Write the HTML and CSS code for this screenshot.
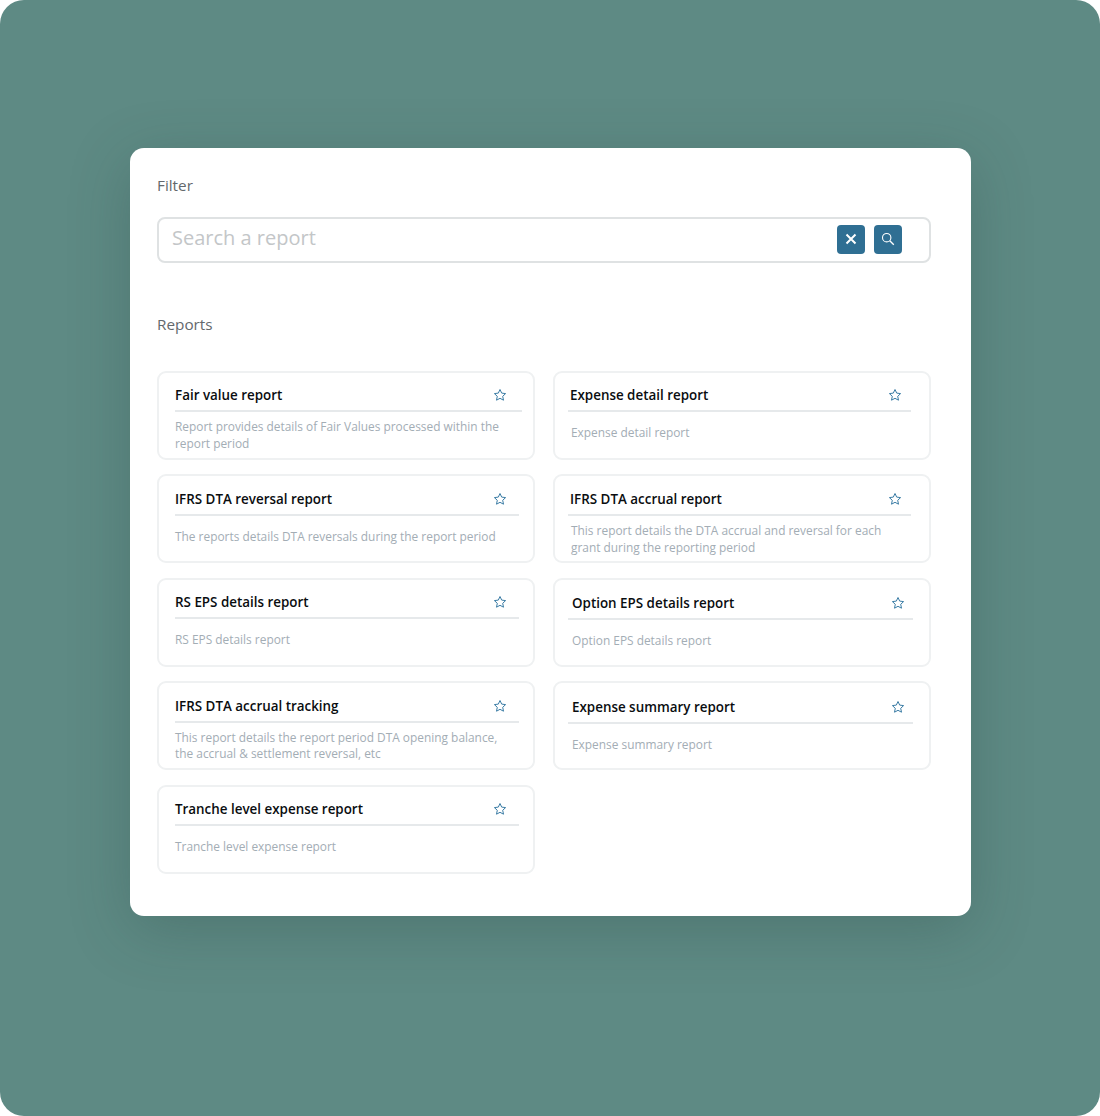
FILE: index.html
```html
<!DOCTYPE html>
<html lang="en">
<head>
  <meta charset="UTF-8">
  <meta name="viewport" content="width=device-width, initial-scale=1.0">
  <title>Reports</title>
  <link rel="stylesheet" href="styles.css">
</head>
<body>
  <svg class="icon-defs" width="0" height="0" aria-hidden="true">
    <symbol id="star" viewBox="0 0 14 14">
      <path d="M7 1.5l1.7 3.6 3.9.5-2.9 2.7.8 3.9L7 10.3l-3.5 1.9.8-3.9-2.9-2.7 3.9-.5z" fill="none" stroke="currentColor" stroke-width="1" stroke-linejoin="round"/>
    </symbol>
  </svg>
  <div class="stage">
    <div class="panel">
      <h2 class="section-label">Filter</h2>
      <div class="search">
        <input class="search-input" type="text" placeholder="Search a report">
        <button class="search-btn" aria-label="Clear">
          <svg width="12" height="12" viewBox="0 0 12 12"><path d="M1.5 1.5l9 9M10.5 1.5l-9 9" stroke="#fff" stroke-width="2" fill="none"/></svg>
        </button>
        <button class="search-btn" aria-label="Search">
          <svg width="14" height="14" viewBox="0 0 14 14"><circle cx="5.7" cy="5.7" r="4.2" stroke="#fff" stroke-width="1.1" fill="none"/><path d="M8.8 8.8l4 4" stroke="#fff" stroke-width="1.3" fill="none"/></svg>
        </button>
      </div>

      <h2 class="section-label section-label-reports">Reports</h2>

      <div class="report-grid">
        <div class="report-card wide-rule">
          <div class="report-head"><span class="report-title">Fair value report</span><svg class="star"><use href="#star"/></svg></div>
          <p class="report-desc">Report provides details of Fair Values processed within the report period</p>
        </div>
        <div class="report-card right">
          <div class="report-head"><span class="report-title">Expense detail report</span><svg class="star"><use href="#star"/></svg></div>
          <p class="report-desc single">Expense detail report</p>
        </div>
        <div class="report-card second-row">
          <div class="report-head"><span class="report-title">IFRS DTA reversal report</span><svg class="star"><use href="#star"/></svg></div>
          <p class="report-desc single">The reports details DTA reversals during the report period</p>
        </div>
        <div class="report-card right second-row">
          <div class="report-head"><span class="report-title">IFRS DTA accrual report</span><svg class="star"><use href="#star"/></svg></div>
          <p class="report-desc">This report details the DTA accrual and reversal for each grant during the reporting period</p>
        </div>
        <div class="report-card">
          <div class="report-head"><span class="report-title">RS EPS details report</span><svg class="star"><use href="#star"/></svg></div>
          <p class="report-desc single">RS EPS details report</p>
        </div>
        <div class="report-card right lower">
          <div class="report-head"><span class="report-title">Option EPS details report</span><svg class="star"><use href="#star"/></svg></div>
          <p class="report-desc single">Option EPS details report</p>
        </div>
        <div class="report-card">
          <div class="report-head"><span class="report-title">IFRS DTA accrual tracking</span><svg class="star"><use href="#star"/></svg></div>
          <p class="report-desc">This report details the report period DTA opening balance, the accrual &amp; settlement reversal, etc</p>
        </div>
        <div class="report-card right lower">
          <div class="report-head"><span class="report-title">Expense summary report</span><svg class="star"><use href="#star"/></svg></div>
          <p class="report-desc single">Expense summary report</p>
        </div>
        <div class="report-card">
          <div class="report-head"><span class="report-title">Tranche level expense report</span><svg class="star"><use href="#star"/></svg></div>
          <p class="report-desc single">Tranche level expense report</p>
        </div>
      </div>
    </div>
  </div>
</body>
</html>
```

FILE: styles.css
```css
body {
  margin: 0;
  background: #fff;
  font-family: "Open Sans", sans-serif;
}

.icon-defs {
  position: absolute;
}

.stage {
  box-sizing: border-box;
  height: 1116px;
  padding: 148px 129px 0 130px;
  background: #5e8a84;
  border-radius: 24px;
}

.panel {
  box-sizing: border-box;
  height: 768px;
  padding: 26px 40px 0 27px;
  background: #fff;
  border-radius: 14px;
  box-shadow: 0 14px 60px rgba(40, 70, 66, 0.28);
}

.section-label {
  margin: 0;
  font-size: 15.3px;
  line-height: 22px;
  font-weight: 500;
  color: #63686c;
}

.section-label-reports {
  margin-top: 50px;
}

.search {
  box-sizing: border-box;
  display: flex;
  align-items: center;
  gap: 9px;
  height: 46px;
  margin-top: 21px;
  padding: 0 27px 0 13px;
  border: 2px solid #dfe2e3;
  border-radius: 8px;
}

.search-input {
  flex: 1;
  min-width: 0;
  padding: 0 0 6px;
  border: 0;
  outline: none;
  font-family: inherit;
  font-size: 20px;
}

.search-input::placeholder {
  color: #c3c6c8;
  opacity: 1;
}

.search-btn {
  display: flex;
  align-items: center;
  justify-content: center;
  width: 28px;
  height: 29px;
  margin-bottom: 2px;
  padding: 0;
  border: 0;
  border-radius: 4px;
  background: #2f6f93;
}

.report-grid {
  display: grid;
  grid-template-columns: 378px 378px;
  grid-auto-rows: 89px;
  gap: 14.5px 18px;
  margin-top: 35.8px;
}

.report-card {
  box-sizing: border-box;
  padding: 11px 14px 0 16px;
  border: 2px solid #eff1f2;
  border-radius: 9px;
}

.report-card.wide-rule {
  padding-right: 11px;
}

.report-card.wide-rule .report-head {
  padding-right: 15px;
}

.report-card.right {
  padding: 11px 18px 0 13px;
}

.report-card.right .report-head {
  padding-right: 9px;
}

.report-card.right .report-title {
  margin-left: 2px;
}

.report-card.right .report-desc {
  padding-left: 3px;
}

.report-card.second-row {
  padding-top: 11.5px;
}

.report-card.lower {
  padding: 12px 16px 0 13px;
}

.report-card.lower .report-head {
  padding-right: 8px;
}

.report-card.lower .report-title,
.report-card.lower .report-desc {
  margin-left: 4px;
}

.report-card.lower .report-desc {
  padding-left: 0;
}

.report-head {
  display: flex;
  align-items: center;
  justify-content: space-between;
  height: 22.5px;
  padding-right: 12px;
  padding-bottom: 4px;
  border-bottom: 2px solid #e6e9eb;
}

.report-title {
  font-size: 13.4px;
  font-weight: 600;
  color: #0a0d10;
}

.star {
  width: 14px;
  height: 14px;
  color: #3a7ca5;
}

.report-desc {
  margin: 6px 0 0;
  padding-right: 15px;
  font-size: 11.9px;
  line-height: 16.5px;
  color: #a3adb5;
}

.report-desc.single {
  margin-top: 12px;
}
```
